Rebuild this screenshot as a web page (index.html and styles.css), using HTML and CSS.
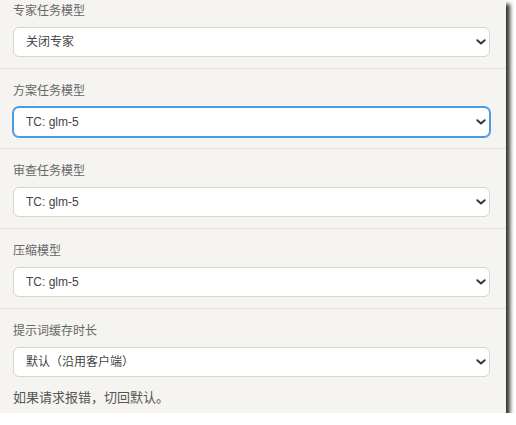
FILE: index.html
```html
<!DOCTYPE html>
<html>
  <head>
    <title>模型设置</title>
    <link rel="stylesheet" href="styles.css">
  </head>
  <body>
    <div class="panel">
      <div class="field">
        <label class="field-label" for="expertModel">专家任务模型</label>
        <div class="select-wrap">
          <select id="expertModel" class="select">
            <option>关闭专家</option>
          </select>
          <svg class="chevron" width="10" height="6" viewBox="0 0 10 6"><path d="M1.3 1.2 L5 4.5 L8.7 1.2" /></svg>
        </div>
      </div>

      <div class="field">
        <label class="field-label" for="planModel">方案任务模型</label>
        <div class="select-wrap">
          <select id="planModel" class="select focused">
            <option>TC: glm-5</option>
          </select>
          <svg class="chevron" width="10" height="6" viewBox="0 0 10 6"><path d="M1.3 1.2 L5 4.5 L8.7 1.2" /></svg>
        </div>
      </div>

      <div class="field">
        <label class="field-label" for="reviewModel">审查任务模型</label>
        <div class="select-wrap">
          <select id="reviewModel" class="select">
            <option>TC: glm-5</option>
          </select>
          <svg class="chevron" width="10" height="6" viewBox="0 0 10 6"><path d="M1.3 1.2 L5 4.5 L8.7 1.2" /></svg>
        </div>
      </div>

      <div class="field">
        <label class="field-label" for="compressModel">压缩模型</label>
        <div class="select-wrap">
          <select id="compressModel" class="select">
            <option>TC: glm-5</option>
          </select>
          <svg class="chevron" width="10" height="6" viewBox="0 0 10 6"><path d="M1.3 1.2 L5 4.5 L8.7 1.2" /></svg>
        </div>
      </div>

      <div class="field last">
        <label class="field-label" for="cacheTtl">提示词缓存时长</label>
        <div class="select-wrap">
          <select id="cacheTtl" class="select">
            <option>默认（沿用客户端）</option>
          </select>
          <svg class="chevron" width="10" height="6" viewBox="0 0 10 6"><path d="M1.3 1.2 L5 4.5 L8.7 1.2" /></svg>
        </div>
        <p class="hint">如果请求报错，切回默认。</p>
      </div>
    </div>
  </body>
</html>
```

FILE: styles.css
```css
body {
  margin: 0;
  padding: 0;
  background: #ffffff;
  font-family: "Liberation Sans", "Noto Sans CJK SC", sans-serif;
}

.panel {
  width: 506px;
  height: 413px;
  background-color: #f5f4f1;
  box-shadow: 4px 4px 4px rgba(30, 30, 30, 0.9);
  overflow: hidden;
}

.field {
  display: flex;
  flex-direction: column;
  gap: 7px;
  padding: 13px 16px 11px 13px;
  border-bottom: 1px solid #e1e0dd;
}

.field:first-child {
  padding-top: 2px;
}

.field.last {
  border-bottom: none;
  gap: 0;
}

.field-label {
  font-size: 12px;
  line-height: 18px;
  color: #666666;
}

.field.last .field-label {
  margin-bottom: 7px;
}

.select-wrap {
  position: relative;
  height: 30px;
}

.select {
  appearance: none;
  -webkit-appearance: none;
  width: 100%;
  height: 30px;
  box-sizing: border-box;
  margin: 0;
  padding: 0 24px 0 12px;
  border: 1px solid #d6d5d2;
  border-radius: 6px;
  background-color: #ffffff;
  color: #444444;
  font-family: "Liberation Sans", "Noto Sans CJK SC", sans-serif;
  font-size: 12px;
  outline: none;
}

.select.focused {
  border-color: #4a9ae6;
  box-shadow: 0 0 0 1px #4a9ae6;
}

.chevron {
  position: absolute;
  right: 4px;
  top: 12px;
  fill: none;
  stroke: #333333;
  stroke-width: 1.9;
  stroke-linecap: round;
  stroke-linejoin: round;
}

.hint {
  margin: 12px 0 0 0;
  font-size: 13px;
  line-height: 18px;
  color: #555555;
}
```
